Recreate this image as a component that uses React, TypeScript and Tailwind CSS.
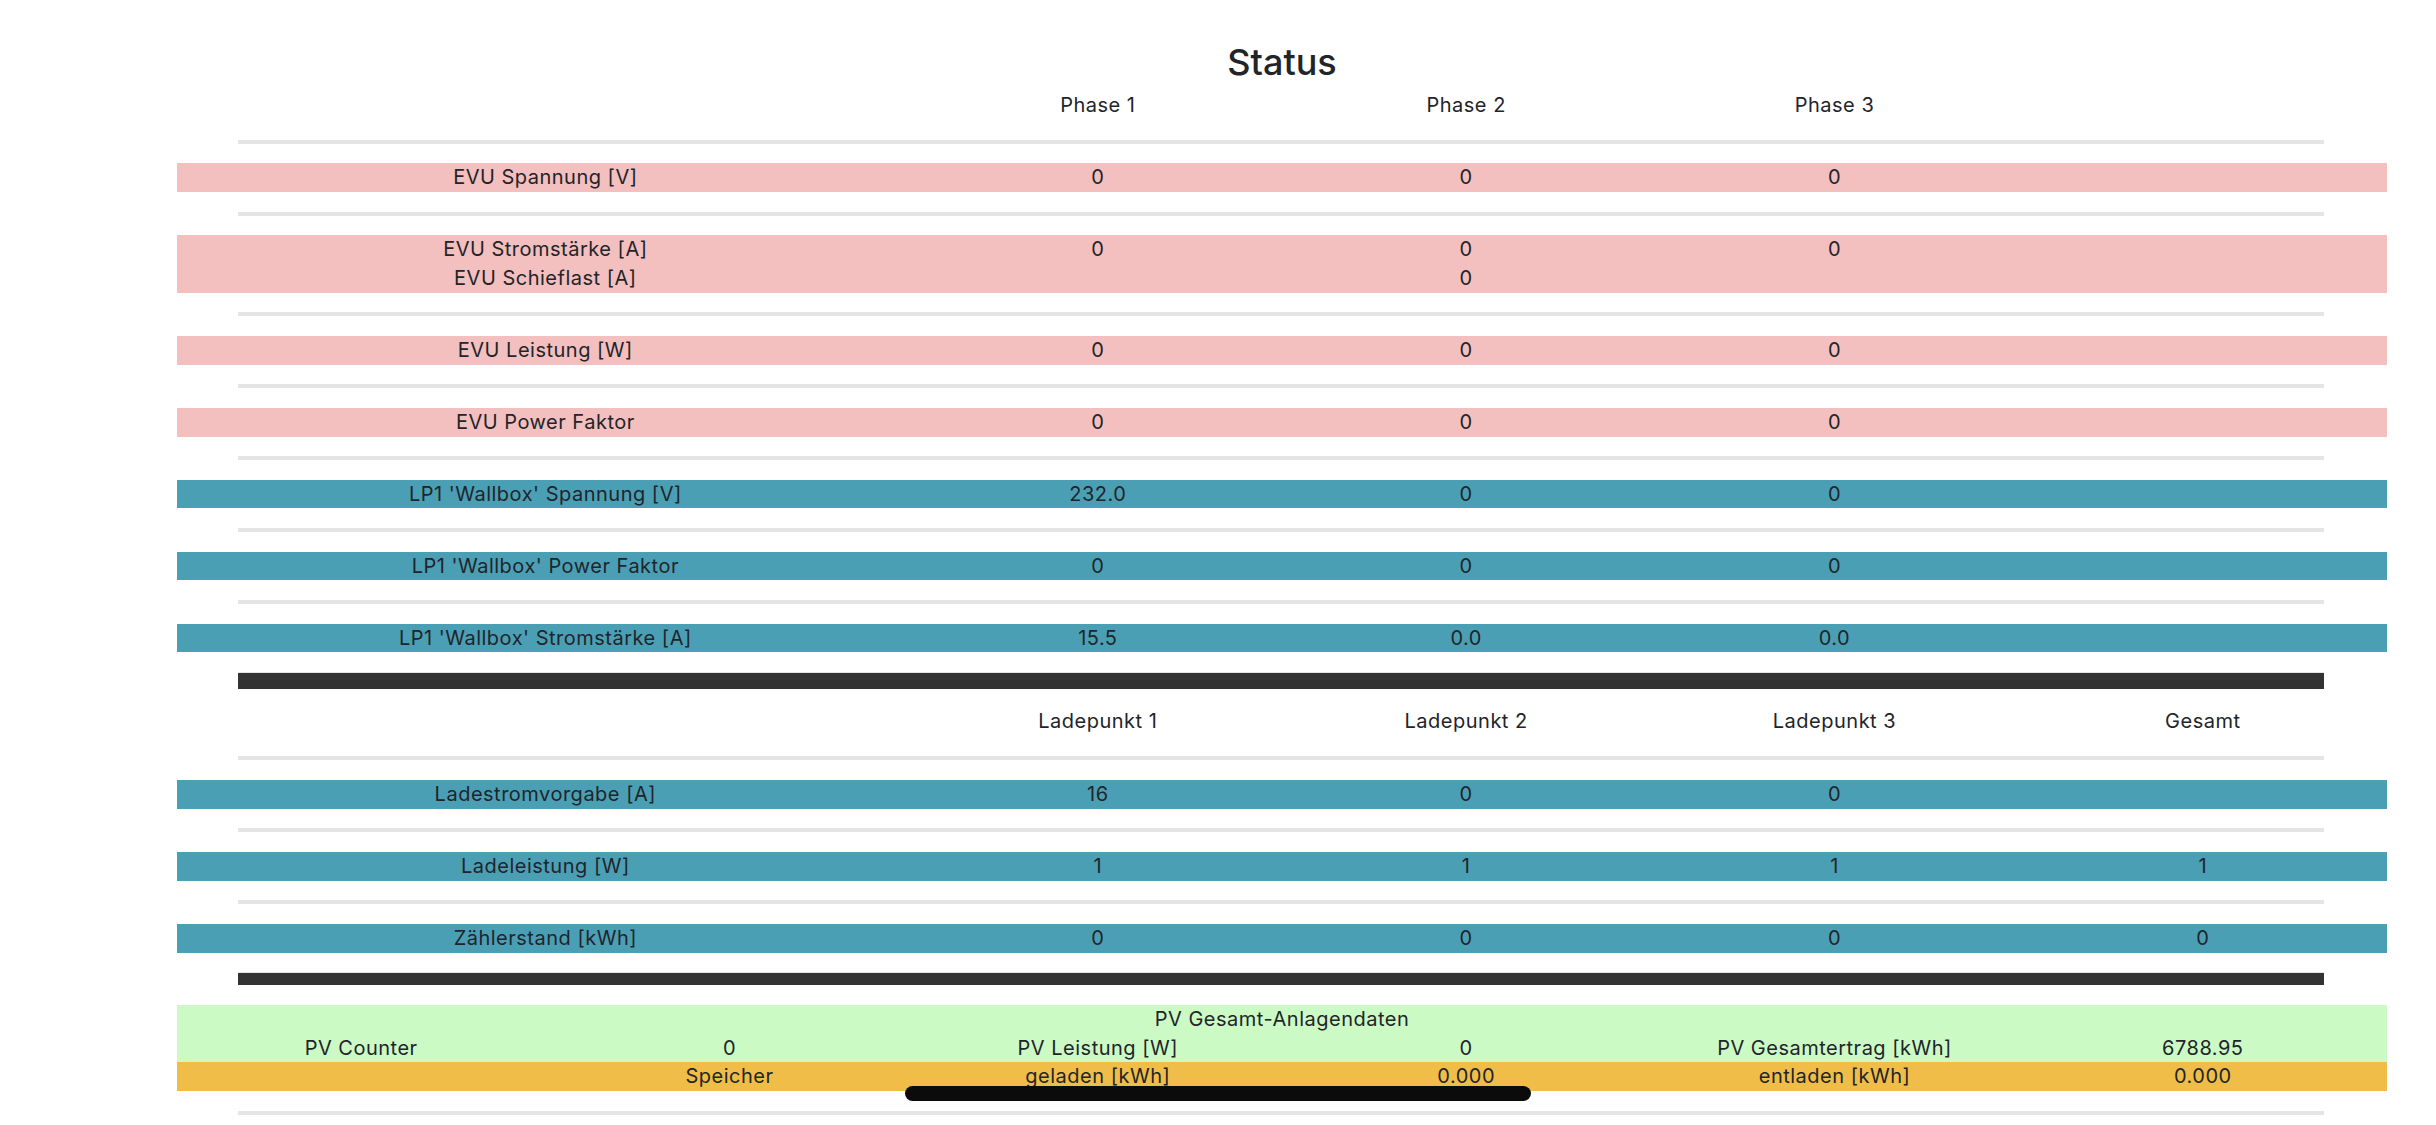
import React from "react";

type Cell = string;

function Line({ cells, className = "" }: { cells: Cell[]; className?: string }) {
  return (
    <div className={`grid grid-cols-6 h-[28.667px] items-center text-center text-[20px] leading-[28.667px] tracking-[0.5px] ${className}`}>
      <div className="col-span-2 whitespace-nowrap">{cells[0]}</div>
      <div className="whitespace-nowrap">{cells[1]}</div>
      <div className="whitespace-nowrap">{cells[2]}</div>
      <div className="whitespace-nowrap">{cells[3]}</div>
      <div className="whitespace-nowrap">{cells[4]}</div>
    </div>
  );
}

function SixLine({ cells }: { cells: Cell[] }) {
  return (
    <div className="grid grid-cols-6 h-[28.667px] items-center text-center text-[20px] leading-[28.667px] tracking-[0.5px]">
      {cells.map((c, i) => (
        <div key={i} className="whitespace-nowrap">
          {c}
        </div>
      ))}
    </div>
  );
}

function Hr() {
  return <div className="ml-[61px] mr-[63px] h-[4px] bg-[#e5e5e5] my-[19.667px]" />;
}

function PinkRow({ lines }: { lines: Cell[][] }) {
  return (
    <div className="bg-[#f3bfbf]">
      {lines.map((l, i) => (
        <Line key={i} cells={l} />
      ))}
    </div>
  );
}

function BlueRow({ lines }: { lines: Cell[][] }) {
  return (
    <div className="bg-[#4b9fb5]">
      {lines.map((l, i) => (
        <Line key={i} cells={l} />
      ))}
    </div>
  );
}

export default function App() {
  return (
    <div className="relative w-[2436px] h-[1125px] overflow-hidden bg-white text-[#212529] font-['Inter','Noto_Sans',sans-serif]">
      <div className="ml-[177px] w-[2210px] pt-[40px]">
        <h1 className="text-center text-[36px] leading-[44px] font-medium">Status</h1>
        <Line className="mt-[7.333px]" cells={["", "Phase 1", "Phase 2", "Phase 3", ""]} />
        <Hr />
        <PinkRow lines={[["EVU Spannung [V]", "0", "0", "0", ""]]} />
        <Hr />
        <PinkRow
          lines={[
            ["EVU Stromstärke [A]", "0", "0", "0", ""],
            ["EVU Schieflast [A]", "", "0", "", ""],
          ]}
        />
        <Hr />
        <PinkRow lines={[["EVU Leistung [W]", "0", "0", "0", ""]]} />
        <Hr />
        <PinkRow lines={[["EVU Power Faktor", "0", "0", "0", ""]]} />
        <Hr />
        <BlueRow lines={[["LP1 'Wallbox' Spannung [V]", "232.0", "0", "0", ""]]} />
        <Hr />
        <BlueRow lines={[["LP1 'Wallbox' Power Faktor", "0", "0", "0", ""]]} />
        <Hr />
        <BlueRow lines={[["LP1 'Wallbox' Stromstärke [A]", "15.5", "0.0", "0.0", ""]]} />
        <div className="ml-[61px] mr-[63px] mt-[19.667px] h-[16.667px] border-t border-[#e5e5e5] bg-[#333333]" />
        <Line className="mt-[18px]" cells={["", "Ladepunkt 1", "Ladepunkt 2", "Ladepunkt 3", "Gesamt"]} />
        <div className="ml-[61px] mr-[63px] h-[4px] bg-[#e5e5e5] mt-[21px] mb-[19.667px]" />
        <BlueRow lines={[["Ladestromvorgabe [A]", "16", "0", "0", ""]]} />
        <Hr />
        <BlueRow lines={[["Ladeleistung [W]", "1", "1", "1", "1"]]} />
        <Hr />
        <BlueRow lines={[["Zählerstand [kWh]", "0", "0", "0", "0"]]} />
        <div className="ml-[61px] mr-[63px] mt-[19.667px] h-[12.333px] border-t border-[#e5e5e5] bg-[#333333]" />
        <div className="mt-[20.333px] bg-[#ccfac5]">
          <div className="h-[28.667px] text-center text-[20px] leading-[28.667px] tracking-[0.5px]">PV Gesamt-Anlagendaten</div>
          <SixLine cells={["PV Counter", "0", "PV Leistung [W]", "0", "PV Gesamtertrag [kWh]", "6788.95"]} />
        </div>
        <div className="bg-[#f0be48]">
          <SixLine cells={["", "Speicher", "geladen [kWh]", "0.000", "entladen [kWh]", "0.000"]} />
        </div>
        <Hr />
      </div>
      <div className="absolute left-[905px] top-[1086px] w-[626px] h-[15px] rounded-full bg-[#0b0b0b]" />
    </div>
  );
}
